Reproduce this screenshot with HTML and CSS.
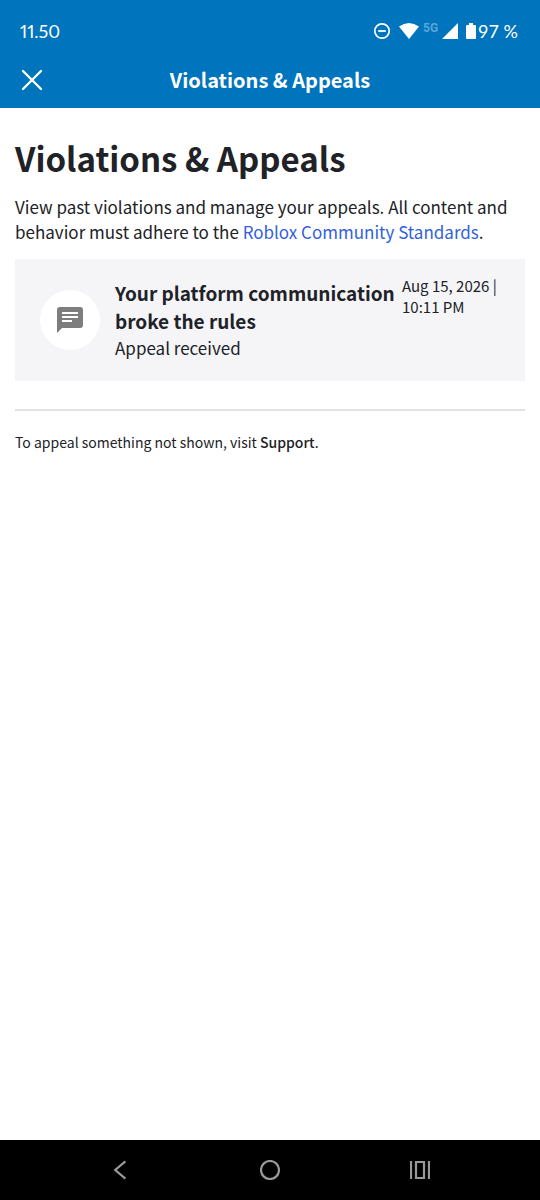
FILE: index.html
```html
<!DOCTYPE html>
<html lang="en">
<head>
<meta charset="utf-8">
<meta name="viewport" content="width=device-width, initial-scale=1">
<title>Violations &amp; Appeals</title>
<link rel="stylesheet" href="styles.css">
</head>
<body>
<header class="top">
  <div class="status">
    <span class="clock">11.50</span>
    <div class="indicators">
      <svg class="dnd" width="18" height="18" viewBox="0 0 18 18" aria-hidden="true"><circle cx="9" cy="9" r="7.2" fill="none" stroke="currentColor" stroke-width="1.7"/><path d="M5.2 9h7.6" stroke="currentColor" stroke-width="1.8"/></svg>
      <svg class="wifi" width="20" height="16" viewBox="0 0 20 16" aria-hidden="true"><path d="M0 3.6Q10-3.6 20 3.6L10 16z" fill="currentColor"/></svg>
      <span class="network">5G</span>
      <svg class="signal" width="16" height="16" viewBox="0 0 16 16" aria-hidden="true"><path d="M16 0v16H0z" fill="currentColor"/></svg>
      <svg class="battery" width="10" height="16" viewBox="0 0 10 16" aria-hidden="true"><path d="M3 0h4v2h2q1 0 1 1v12q0 1-1 1H1q-1 0-1-1V3q0-1 1-1h2z" fill="currentColor"/></svg>
      <span class="percent">97 %</span>
    </div>
  </div>
  <div class="appbar">
    <button class="close" type="button" aria-label="Close">
      <svg width="22" height="22" viewBox="0 0 22 22" aria-hidden="true"><path d="M2 2l18 18M20 2L2 20" fill="none" stroke="currentColor" stroke-width="2.3" stroke-linecap="round"/></svg>
    </button>
    <span class="appbar-title">Violations &amp; Appeals</span>
  </div>
</header>
<main class="content">
  <h1 class="heading">Violations &amp; Appeals</h1>
  <p class="intro">View past violations and manage your appeals. All content and behavior must adhere to the <a class="standards" href="#standards">Roblox Community Standards</a>.</p>
  <article class="card">
    <div class="avatar">
      <svg width="26" height="26" viewBox="0 0 26 26" aria-hidden="true"><path d="M3 0h20q3 0 3 3v15q0 3-3 3H5l-5 5V3q0-3 3-3z" fill="#7d7d7d"/><path d="M5 6h16M5 10h16M5 14h10" stroke="#fff" stroke-width="2.2"/></svg>
    </div>
    <div class="violation">
      <h2 class="violation-title">Your platform communication broke the rules</h2>
      <p class="violation-state">Appeal received</p>
    </div>
    <time class="date" datetime="2026-08-15T22:11">Aug 15, 2026 | 10:11 PM</time>
  </article>
  <hr class="divider">
  <p class="footnote">To appeal something not shown, visit <a class="support" href="#support">Support</a>.</p>
</main>
<nav class="navbar">
  <button class="nav-button" type="button" aria-label="Back"><svg width="20" height="20" viewBox="0 0 20 20" aria-hidden="true"><path d="M15.4 1.4L5.2 10l10.2 8.6" fill="none" stroke="currentColor" stroke-width="2.2"/></svg></button>
  <button class="nav-button" type="button" aria-label="Home"><svg width="20" height="20" viewBox="0 0 20 20" aria-hidden="true"><circle cx="10" cy="10" r="9" fill="none" stroke="currentColor" stroke-width="2.2"/></svg></button>
  <button class="nav-button" type="button" aria-label="Recent apps"><svg width="20" height="20" viewBox="0 0 20 20" aria-hidden="true"><path d="M1 1v18M19 1v18M6 2h8v16H6z" fill="none" stroke="currentColor" stroke-width="2.2"/></svg></button>
</nav>
</body>
</html>
```

FILE: styles.css
```css
* {
  box-sizing: border-box;
}

body {
  margin: 0;
  min-height: 100vh;
  display: flex;
  flex-direction: column;
  background: #fff;
  color: #202227;
  font-family: "Noto Sans CJK SC", "Noto Sans", sans-serif;
}

h1, h2, p {
  margin: 0;
}

button {
  padding: 0;
  border: 0;
  background: none;
  color: inherit;
}

svg {
  display: block;
}

.top {
  background: #0074bd;
  color: #fff;
}

.status {
  display: flex;
  justify-content: space-between;
  align-items: center;
  height: 54px;
  padding: 8px 22px 0 20px;
}

.clock,
.percent {
  font-family: Lato, sans-serif;
  font-size: 18px;
  line-height: 24px;
}

.clock {
  font-variant-numeric: proportional-nums;
}

.indicators {
  display: flex;
  align-items: center;
}

.wifi {
  margin-left: 8px;
}

.network {
  margin: 0 4px;
  color: #5ba6d6;
  font: 700 12px/16px Roboto, sans-serif;
  padding-bottom: 6px;
}

.battery {
  margin: 0 2px 0 8px;
}

.appbar {
  display: grid;
  grid-template-columns: 64px 1fr 64px;
  align-items: center;
  height: 54px;
  padding-bottom: 2px;
}

.close {
  justify-self: center;
}

.appbar-title {
  text-align: center;
  font-size: 20px;
  line-height: 30px;
  font-weight: 700;
}

.content {
  flex: 1;
  padding: 27px 15px;
}

.heading {
  font-size: 33px;
  line-height: 46px;
  font-weight: 700;
}

.intro {
  margin-top: 13px;
  font-size: 17px;
  line-height: 25px;
}

.standards {
  color: #335fdc;
  text-decoration: none;
}

.card {
  display: flex;
  align-items: flex-start;
  margin-top: 15px;
  padding: 20px 25px;
  background: #f5f5f8;
}

.avatar {
  display: grid;
  place-items: center;
  flex: none;
  align-self: center;
  width: 60px;
  height: 60px;
  margin-right: 15px;
  border-radius: 50%;
  background: #fff;
}

.violation {
  flex: 1;
}

.violation-title {
  font-size: 19px;
  line-height: 28px;
  font-weight: 700;
}

.violation-state {
  font-size: 17px;
  line-height: 26px;
}

.date {
  width: 98px;
  flex: none;
  margin-top: -4px;
  font-size: 15px;
  line-height: 21px;
}

.divider {
  margin: 28px 0 20px;
  border: 0;
  border-top: 2px solid #e2e2e3;
}

.footnote {
  font-size: 14px;
  line-height: 22px;
}

.support {
  color: inherit;
  font-weight: 500;
  text-decoration: none;
}

.navbar {
  display: flex;
  justify-content: space-between;
  align-items: center;
  height: 60px;
  padding: 0 110px;
  background: #000;
  color: #999;
}
```
